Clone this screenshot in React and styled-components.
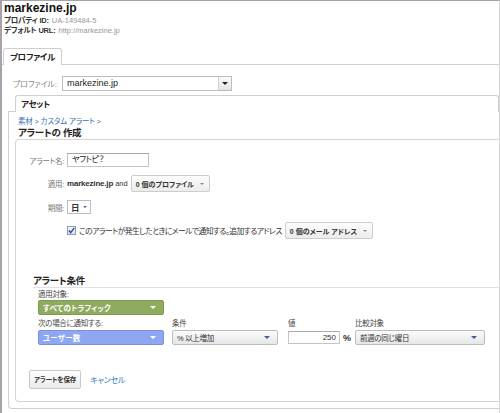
import styled, { createGlobalStyle } from "styled-components";

const GlobalStyle = createGlobalStyle`
  html, body {
    margin: 0;
    padding: 0;
    background: #fff;
  }
  body {
    font-family: "Liberation Sans", "Noto Sans CJK JP", sans-serif;
    font-feature-settings: "palt";
    color: #222;
  }
`;

const Frame = styled.div`
  width: 500px;
  height: 413px;
  box-sizing: border-box;
  overflow: hidden;
  border-left: 2px solid #aaa2aa;
  border-top: 1px solid #a8a0a8;
  border-right: 1px solid #d6d6d6;
  font-size: 8px;
  white-space: nowrap;
`;

const Header = styled.header`
  padding: 0 0 0 2px;
`;

const Title = styled.h1`
  margin: 0;
  font-size: 12px;
  line-height: 15px;
  font-weight: bold;
  color: #111;
`;

const MetaLine = styled.div`
  font-size: 7.5px;
  line-height: 10px;
  color: #999;

  b {
    color: #333;
    margin-right: 3px;
    letter-spacing: -0.2px;
  }
`;

const TabBar = styled.div`
  display: flex;
  margin-top: 12px;
  padding-left: 1px;
  border-bottom: 1px solid #cfcfcf;
`;

const Tab = styled.div`
  position: relative;
  z-index: 1;
  height: 17px;
  box-sizing: border-box;
  margin-bottom: -1px;
  margin-left: ${({ $indent }) => $indent || 0}px;
  padding: 0 ${({ $pad }) => $pad || 6}px;
  border: 1px solid #cfcfcf;
  border-bottom: none;
  border-radius: 3px 3px 0 0;
  background: #fff;
  font-size: 8.5px;
  font-weight: bold;
  letter-spacing: -0.3px;
  line-height: 16px;
  color: #222;
`;

const ProfileRow = styled.div`
  display: flex;
  align-items: center;
  margin: 11px 0 0 11px;
`;

const ProfileLabel = styled.span`
  flex-shrink: 0;
  width: 49px;
  font-size: 8px;
  letter-spacing: -0.2px;
  color: #888;
`;

const ProfileSelect = styled.div`
  display: flex;
  width: 170px;
  height: 15px;
  box-sizing: border-box;
  border: 1px solid #bdbdbd;
  background: #fff;
  font-size: 9px;
  line-height: 13px;
`;

const ProfileValue = styled.span`
  flex: 1;
  padding-left: 4px;
  color: #222;
`;

const ArrowBox = styled.span`
  width: 12px;
  display: flex;
  align-items: center;
  justify-content: center;
  border-left: 1px solid #cfcfcf;
  background: linear-gradient(#fbfbfb, #e4e4e4);
`;

const Caret = styled.span`
  display: inline-block;
  flex-shrink: 0;
  width: 0;
  height: 0;
  border-left: ${({ $size }) => $size || 3}px solid transparent;
  border-right: ${({ $size }) => $size || 3}px solid transparent;
  border-top: ${({ $size }) => $size || 3}px solid ${({ $color }) => $color || "#555"};
  margin-left: ${({ $gap }) => $gap || 0}px;
`;

const SubTabs = styled.div`
  margin: 4px 0 0 6px;
`;

const Panel = styled.section`
  border: 1px solid #d0d0d0;
  border-right: none;
  border-radius: 0 0 0 4px;
  padding: 5px 0 6px 0;
`;

const Crumbs = styled.div`
  padding-left: 9px;
  font-size: 7.5px;
  letter-spacing: -0.2px;
  line-height: 10px;
  color: #3a6fb0;
`;

const Heading = styled.h2`
  margin: 0;
  padding-left: 9px;
  font-size: 9.5px;
  letter-spacing: -0.3px;
  line-height: 11px;
  font-weight: bold;
  color: #222;
`;

const InnerBox = styled.div`
  margin: 1px 0 0 6px;
  border: 1px solid #d5d5d5;
  border-right: none;
  border-radius: 4px 0 0 4px;
  padding: 13px 0 12px 0;
`;

const FormGrid = styled.div`
  display: grid;
  grid-template-columns: 48px 1fr;
  column-gap: 3px;
  row-gap: 8px;
  align-items: center;
`;

const FormLabel = styled.span`
  text-align: right;
  font-size: 7.5px;
  letter-spacing: -0.3px;
  color: #777;
`;

const FormValue = styled.div`
  display: flex;
  align-items: center;
  font-size: 7.5px;
  color: #333;

  b {
    font-size: 8px;
    letter-spacing: -0.2px;
  }
`;

const Notice = styled.span`
  font-size: 7.8px;
  letter-spacing: -0.55px;
`;

const TextInput = styled.div`
  width: 82px;
  height: 14px;
  box-sizing: border-box;
  border: 1px solid #c4c4c4;
  border-top-color: #a9a9a9;
  padding-left: 4px;
  font-size: 8px;
  letter-spacing: -0.3px;
  line-height: 12px;
  color: #222;
`;

const DropButton = styled.div`
  display: flex;
  align-items: center;
  height: 17px;
  box-sizing: border-box;
  margin-left: ${({ $gap }) => $gap || 0}px;
  padding: 0 5px 0 4px;
  border: 1px solid #cdcdcd;
  border-radius: 2px;
  background: linear-gradient(#fdfdfd, #ececec);
  font-size: 7px;
  font-weight: bold;
  letter-spacing: 0;
  color: #333;
`;

const MiniSelect = styled.div`
  display: flex;
  align-items: center;
  height: 14px;
  box-sizing: border-box;
  padding: 0 3px;
  border: 1px solid #bdbdbd;
  background: #fff;
  font-size: 8.5px;
  font-weight: bold;
  color: #333;
`;

const Check = styled.span`
  display: inline-flex;
  align-items: center;
  justify-content: center;
  width: 9px;
  height: 9px;
  box-sizing: border-box;
  margin-right: 3px;
  border: 1px solid #8a9bb4;
  background: linear-gradient(#f2f6fb, #dbe4ef);
`;

const CondHeading = styled.h3`
  margin: 35px 0 0 17px;
  font-size: 9.5px;
  letter-spacing: -0.3px;
  line-height: 13px;
  font-weight: bold;
  color: #222;
  border-bottom: 1px solid #e2e2e2;
`;

const CondSection = styled.div`
  padding-left: 22px;
`;

const FieldLabel = styled.div`
  margin-top: ${({ $top }) => $top || 0}px;
  font-size: 7.5px;
  letter-spacing: -0.3px;
  line-height: ${({ $lh }) => $lh || 12}px;
  color: #444;
`;

const CondRow = styled.div`
  display: flex;
`;

const CondCol = styled.div`
  width: ${({ $w }) => $w}px;
  margin-right: ${({ $gap }) => $gap || 0}px;
`;

const Select = styled.div`
  display: flex;
  align-items: center;
  justify-content: space-between;
  width: ${({ $w }) => ($w ? `${$w}px` : "100%")};
  height: 15px;
  box-sizing: border-box;
  padding: 0 7px 0 4px;
  border: 1px solid ${({ $border }) => $border || "#bcbcbc"};
  border-radius: 2px;
  background: ${({ $bg }) => $bg || "linear-gradient(#fbfbfb, #e6e6e6)"};
  font-size: 7.5px;
  font-weight: ${({ $bold }) => ($bold ? "bold" : "normal")};
  letter-spacing: ${({ $bold }) => ($bold ? "0.2px" : "-0.3px")};
  color: ${({ $fg }) => $fg || "#333"};
`;

const ValueWrap = styled.div`
  display: flex;
  align-items: center;
  height: 15px;
`;

const ValueInput = styled.div`
  width: 52px;
  height: 13px;
  box-sizing: border-box;
  padding-right: 3px;
  border: 1px solid #c4c4c4;
  border-top-color: #a9a9a9;
  text-align: right;
  font-size: 8px;
  line-height: 11px;
  color: #333;
`;

const Percent = styled.span`
  margin-left: 3px;
  font-size: 9px;
  font-weight: bold;
  color: #333;
`;

const Actions = styled.div`
  display: flex;
  align-items: center;
  margin: 25px 0 0 13px;
  gap: 9px;
`;

const SaveButton = styled.div`
  height: 19px;
  box-sizing: border-box;
  padding: 0 4px;
  border: 1px solid #c8c8c8;
  border-radius: 2px;
  background: linear-gradient(#fdfdfd, #ebebeb);
  font-size: 6.5px;
  font-weight: bold;
  letter-spacing: -0.1px;
  line-height: 17px;
  color: #333;
`;

const CancelLink = styled.a`
  font-size: 8px;
  letter-spacing: -0.3px;
  color: #3b78c2;
  text-decoration: none;
`;

export default function App() {
  return (
    <>
      <GlobalStyle />
      <Frame>
        <Header>
          <Title>markezine.jp</Title>
          <MetaLine>
            <b>プロパティ ID:</b>UA-149484-5
          </MetaLine>
          <MetaLine>
            <b>デフォルト URL:</b>http://markezine.jp
          </MetaLine>
        </Header>

        <TabBar>
          <Tab>プロファイル</Tab>
        </TabBar>

        <ProfileRow>
          <ProfileLabel>プロファイル:</ProfileLabel>
          <ProfileSelect>
            <ProfileValue>markezine.jp</ProfileValue>
            <ArrowBox>
              <Caret $color="#222" />
            </ArrowBox>
          </ProfileSelect>
        </ProfileRow>

        <SubTabs>
          <Tab $indent={7} $pad={5}>アセット</Tab>
          <Panel>
            <Crumbs>素材 &gt; カスタム アラート &gt;</Crumbs>
            <Heading>アラートの 作成</Heading>

            <InnerBox>
              <FormGrid>
                <FormLabel>アラート名:</FormLabel>
                <FormValue>
                  <TextInput>ヤフトピ？</TextInput>
                </FormValue>

                <FormLabel>適用:</FormLabel>
                <FormValue>
                  <b>markezine.jp</b>&nbsp;and
                  <DropButton $gap={3}>
                    0 個のプロファイル
                    <Caret $color="#888" $gap={6} $size={2.5} />
                  </DropButton>
                </FormValue>

                <FormLabel>期間:</FormLabel>
                <FormValue>
                  <MiniSelect>
                    日
                    <Caret $color="#3d6db0" $gap={3} $size={2.5} />
                  </MiniSelect>
                </FormValue>

                <span />
                <FormValue>
                  <Check>
                    <svg width="7" height="7" viewBox="0 0 7 7">
                      <path d="M0.8 3.6 L2.7 5.6 L6.3 0.8" fill="none" stroke="#2a4d8a" strokeWidth="1.4" />
                    </svg>
                  </Check>
                  <Notice>このアラートが発生したときにメールで通知する。追加するアドレス</Notice>
                  <DropButton $gap={3}>
                    0 個のメール アドレス
                    <Caret $color="#888" $gap={6} $size={2.5} />
                  </DropButton>
                </FormValue>
              </FormGrid>

              <CondHeading>アラート条件</CondHeading>
              <CondSection>
                <FieldLabel $top={1} $lh={11}>適用対象:</FieldLabel>
                <Select $w={126} $bg="#8eab5f" $border="#7e9c50" $fg="#fff" $bold>
                  すべてのトラフィック
                  <Caret $color="#fff" />
                </Select>

                <CondRow>
                  <CondCol $w={126} $gap={8}>
                    <FieldLabel $top={3}>次の場合に通知する:</FieldLabel>
                    <Select $bg="#8fa6f2" $border="#7b92e2" $fg="#fff" $bold>
                      ユーザー数
                      <Caret $color="#fff" />
                    </Select>
                  </CondCol>
                  <CondCol $w={106} $gap={10}>
                    <FieldLabel $top={3}>条件</FieldLabel>
                    <Select>
                      % 以上増加
                      <Caret $color="#3d5f95" />
                    </Select>
                  </CondCol>
                  <CondCol $w={67}>
                    <FieldLabel $top={3}>値</FieldLabel>
                    <ValueWrap>
                      <ValueInput>250</ValueInput>
                      <Percent>%</Percent>
                    </ValueWrap>
                  </CondCol>
                  <CondCol $w={130}>
                    <FieldLabel $top={3}>比較対象</FieldLabel>
                    <Select>
                      前週の同じ曜日
                      <Caret $color="#3d5f95" />
                    </Select>
                  </CondCol>
                </CondRow>
              </CondSection>

              <Actions>
                <SaveButton>アラートを保存</SaveButton>
                <CancelLink href="#">キャンセル</CancelLink>
              </Actions>
            </InnerBox>
          </Panel>
        </SubTabs>
      </Frame>
    </>
  );
}
